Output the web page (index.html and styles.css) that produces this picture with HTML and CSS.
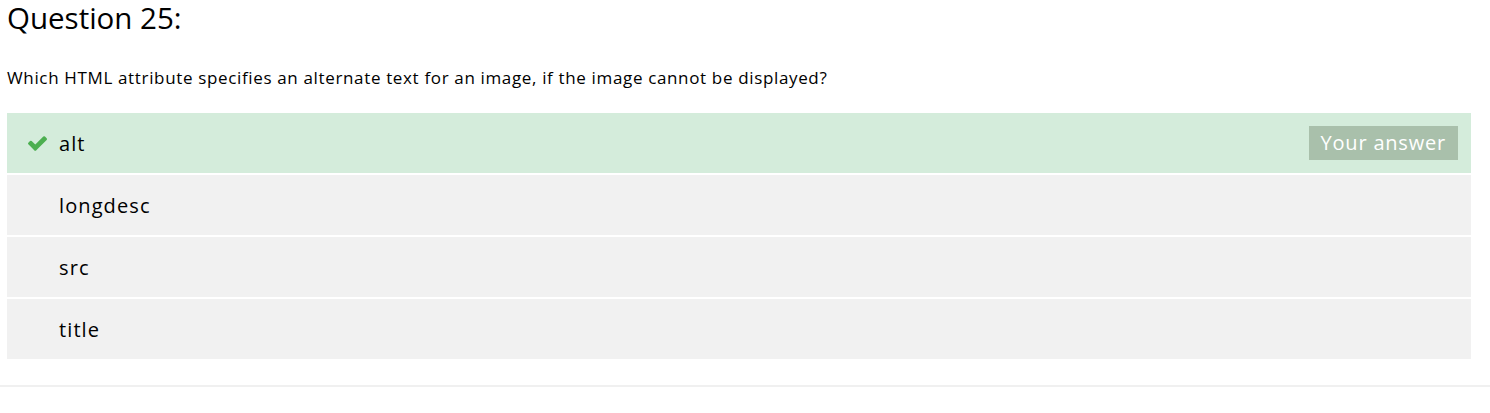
FILE: index.html
```html
<!DOCTYPE html>
<html>
<head>
<meta charset="utf-8">
<link rel="stylesheet" href="styles.css">
</head>
<body>
<div class="quiz">
  <h2 class="title">Question 25:</h2>
  <p class="question">Which HTML attribute specifies an alternate text for an image, if the image cannot be displayed?</p>
  <div class="options">
    <div class="option correct">
      <span class="mark"><svg width="19" height="15" viewBox="121 334 1550 1188"><path d="M1671 566q0 40-28 68l-724 724-136 136q-28 28-68 28t-68-28l-136-136-362-362q-28-28-28-68t28-68l136-136q28-28 68-28t68 28l294 295 656-657q28-28 68-28t68 28l136 136q28 28 28 68z" fill="#4caf50"/></svg></span>
      <span class="label">alt</span>
      <span class="badge">Your answer</span>
    </div>
    <div class="option"><span class="mark"></span><span class="label">longdesc</span></div>
    <div class="option"><span class="mark"></span><span class="label">src</span></div>
    <div class="option"><span class="mark"></span><span class="label">title</span></div>
  </div>
</div>
<hr class="rule">
</body>
</html>
```
FILE: styles.css
```css
html, body { margin: 0; padding: 0; background: #fff; }
body { font-family: "Open Sans", "Noto Sans", sans-serif; color: #000; }
.quiz { padding: 0 19px 0 7px; }
.title { margin: 0; font-size: 29.5px; font-weight: 400; line-height: 36px; }
.question { margin: 30px 0 23px 0; font-size: 17px; line-height: 24px; letter-spacing: 0.65px; }
.options { display: flex; flex-direction: column; gap: 2px; }
.option { display: flex; align-items: center; height: 60px; background: #f1f1f1; font-size: 20px; letter-spacing: 1.1px; }
.option.correct { background: #d4ecdb; }
.mark { width: 52px; flex: none; padding-left: 21px; box-sizing: border-box; display: flex; align-items: center; }
.mark svg { display: block; margin-top: 1px; }
.label { flex: 1; }
.badge { background: #a9c0ab; color: #fff; font-size: 20px; letter-spacing: 0.8px; line-height: 34px; padding: 0 12px; margin-right: 13px; }
.rule { margin: 26px 0 0 0; border: 0; border-top: 2px solid #f0f0f0; }
```
